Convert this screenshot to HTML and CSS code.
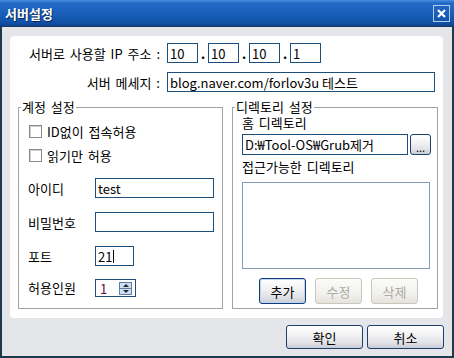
FILE: index.html
```html
<!DOCTYPE html>
<html>
<head>
    <title>서버설정</title>
    <link rel="stylesheet" href="styles.css">
</head>
<body>
    <div class="window">
        <div class="titlebar">
            <span class="title">서버설정</span>
            <span class="close">
                <svg width="9" height="9" viewBox="0 0 9 9"><path d="M1 1L8 8M8 1L1 8" stroke="#fff" stroke-width="2.2"/></svg>
            </span>
        </div>
        <div class="content">
            <div class="panel">
                <div class="top-row">
                    <label class="row-label">서버로 사용할 IP 주소 :</label>
                    <input class="field ip-box" type="text" value="10">
                    <span class="dot">.</span>
                    <input class="field ip-box" type="text" value="10">
                    <span class="dot">.</span>
                    <input class="field ip-box" type="text" value="10">
                    <span class="dot">.</span>
                    <input class="field ip-box" type="text" value="1">
                </div>
                <div class="top-row second">
                    <label class="row-label">서버 메세지 :</label>
                    <input class="field msg" type="text" value="blog.naver.com/forlov3u 테스트">
                </div>

                <div class="groups">
                    <fieldset class="group account">
                        <legend>계정 설정</legend>
                        <div class="account-body">
                            <label class="check"><span class="box"></span>ID없이 접속허용</label>
                            <label class="check next"><span class="box"></span>읽기만 허용</label>

                            <div class="form-row first">
                                <span class="form-label">아이디</span>
                                <input class="field wide" type="text" value="test">
                            </div>
                            <div class="form-row">
                                <span class="form-label">비밀번호</span>
                                <input class="field wide" type="password" value="">
                            </div>
                            <div class="form-row">
                                <span class="form-label">포트</span>
                                <div class="field port">21<span class="caret"></span></div>
                            </div>
                            <div class="form-row last">
                                <span class="form-label">허용인원</span>
                                <div class="field spin">
                                    <span class="spin-value">1</span>
                                    <span class="spin-btns">
                                        <span class="spin-btn up"></span>
                                        <span class="spin-btn down"></span>
                                    </span>
                                </div>
                            </div>
                        </div>
                    </fieldset>

                    <fieldset class="group dirs">
                        <legend>디렉토리 설정</legend>
                        <div class="dirs-body">
                            <div class="dir-label">홈 디렉토리</div>
                            <div class="dir-row">
                                <input class="field home" type="text" value="D:₩Tool-OS₩Grub제거">
                                <button class="btn browse">...</button>
                            </div>
                            <div class="dir-label second">접근가능한 디렉토리</div>
                            <div class="listbox"></div>
                            <div class="list-buttons">
                                <button class="btn small focus">추가</button>
                                <button class="btn small" disabled>수정</button>
                                <button class="btn small" disabled>삭제</button>
                            </div>
                        </div>
                    </fieldset>
                </div>
            </div>

            <div class="footer">
                <button class="btn big">확인</button>
                <button class="btn big">취소</button>
            </div>
        </div>
    </div>
</body>
</html>
```

FILE: styles.css
```css
body {
    margin: 0;
    font-family: "Noto Sans CJK KR", sans-serif;
    font-size: 13px;
    color: #000;
    background: #fff;
}
.window {
    width: 454px;
    height: 358px;
    display: flex;
    flex-direction: column;
}
.titlebar {
    height: 26px;
    display: flex;
    align-items: center;
    justify-content: space-between;
    padding: 0 4px 0 5px;
    background: linear-gradient(#4a8ee0 0%, #2369c6 12%, #1a5fba 50%, #1152a8 85%, #0b4390 100%);
    border-bottom: 1px solid #173a5e;
}
.title {
    color: #fff;
    font-weight: bold;
    text-shadow: 1px 1px 0 #0a2450;
}
.close {
    width: 17px;
    height: 17px;
    box-sizing: border-box;
    border: 1px solid #b6cbea;
    display: flex;
    align-items: center;
    justify-content: center;
}
.content {
    flex: 1;
    background: #e5e6ea;
    border: 2px solid #1e3a4c;
    border-top: 0;
    padding: 9px 8px 0 8px;
}
.panel {
    width: 433px;
    height: 282px;
    box-sizing: border-box;
    background: #fff;
    border-radius: 4px;
    padding-top: 7px;
}
.top-row {
    display: flex;
    align-items: center;
    height: 20px;
}
.top-row.second {
    margin-top: 9px;
}
.row-label {
    width: 150px;
    padding-right: 7px;
    text-align: right;
    white-space: nowrap;
    word-spacing: 2px;
}
.field {
    box-sizing: border-box;
    height: 20px;
    border: 1px solid #1d4f7c;
    padding: 0 2px;
    margin: 0;
    font: inherit;
    color: #000;
    background: #fff;
    outline: none;
}
.ip-box {
    width: 31px;
}
.dot {
    width: 10px;
    text-align: center;
    font-weight: bold;
}
.msg {
    width: 268px;
}
.groups {
    display: flex;
    gap: 9px;
    padding-left: 8px;
    margin-top: 8px;
}
.group {
    margin: 0;
    padding: 0;
    min-width: 0;
    height: 209px;
    box-sizing: border-box;
    border: 1px solid #a3a3a3;
}
.account {
    width: 205px;
}
.dirs {
    width: 206px;
}
legend {
    padding: 0 1px;
    margin-left: 2px;
    line-height: 14px;
    word-spacing: 2px;
}
.account-body {
    padding: 7px 0 0 9px;
}
.check {
    display: flex;
    align-items: center;
    gap: 5px;
    height: 20px;
    margin-left: 1px;
    word-spacing: 2px;
}
.check.next {
    margin-top: 4px;
}
.box {
    width: 13px;
    height: 13px;
    box-sizing: border-box;
    border: 1px solid #8a8a8a;
    background: #fff;
    box-shadow: inset 1px 1px 0 #cfcfcf;
}
.form-row {
    display: flex;
    align-items: center;
    height: 20px;
    margin-top: 14px;
}
.form-row.first {
    margin-top: 13px;
}
.form-row.last {
    margin-top: 13px;
    align-items: flex-start;
}
.form-row.last .form-label {
    line-height: 18px;
}
.form-label {
    width: 67px;
}
.wide {
    width: 119px;
}
.port {
    width: 39px;
    display: flex;
    align-items: center;
}
.caret {
    width: 1px;
    height: 13px;
    margin-left: 1px;
    background: #000;
}
.spin {
    width: 41px;
    height: 18px;
    display: flex;
    align-items: center;
    padding: 0 3px 0 4px;
}
.spin-value {
    color: #5c0b3c;
    flex: 1;
}
.spin-btns {
    display: flex;
    flex-direction: column;
    width: 13px;
    height: 13px;
    box-sizing: border-box;
    border: 1px solid #5d7fa8;
    background: #d3deec;
}
.spin-btn {
    flex: 1;
    display: flex;
    align-items: center;
    justify-content: center;
}
.spin-btn.up {
    border-bottom: 1px solid #5d7fa8;
}
.spin-btn.up::after {
    content: "";
    border: 3px solid transparent;
    border-top: 0;
    border-bottom: 3px solid #1b2a3a;
}
.spin-btn.down::after {
    content: "";
    border: 3px solid transparent;
    border-bottom: 0;
    border-top: 3px solid #1b2a3a;
}
.dirs-body {
    padding: 2px 0 0 9px;
}
.dir-label {
    line-height: 14px;
    word-spacing: 2px;
}
.dir-label.second {
    margin-top: 5px;
}
.dir-row {
    display: flex;
    gap: 2px;
    margin-top: 4px;
}
.home {
    width: 166px;
    height: 21px;
}
.btn {
    box-sizing: border-box;
    padding: 0;
    font: inherit;
    color: #000;
    border: 1px solid #1d3f6e;
    border-radius: 3px;
    background: linear-gradient(#ffffff 0%, #f4f4f6 35%, #e2e3e8 75%, #c9ccd4 100%);
}
.browse {
    width: 21px;
    height: 21px;
    line-height: 24px;
    font-size: 11px;
}
.listbox {
    width: 188px;
    height: 87px;
    box-sizing: border-box;
    margin-top: 8px;
    border: 1px solid #7f9db9;
    background: #fff;
}
.list-buttons {
    display: flex;
    gap: 9px;
    margin-top: 9px;
    padding-left: 17px;
}
.small {
    width: 47px;
    height: 26px;
}
.focus {
    border-color: #0f3d78;
    box-shadow: inset 0 0 0 1px #c2d3ee;
}
.btn:disabled {
    color: #aeaca2;
    border-color: #c9c7ba;
    background: linear-gradient(#fbfbf9 0%, #f1f1ee 60%, #e4e3dd 100%);
}
.footer {
    display: flex;
    justify-content: flex-end;
    gap: 4px;
    padding-top: 7px;
}
.big {
    width: 77px;
    height: 24px;
}
```
